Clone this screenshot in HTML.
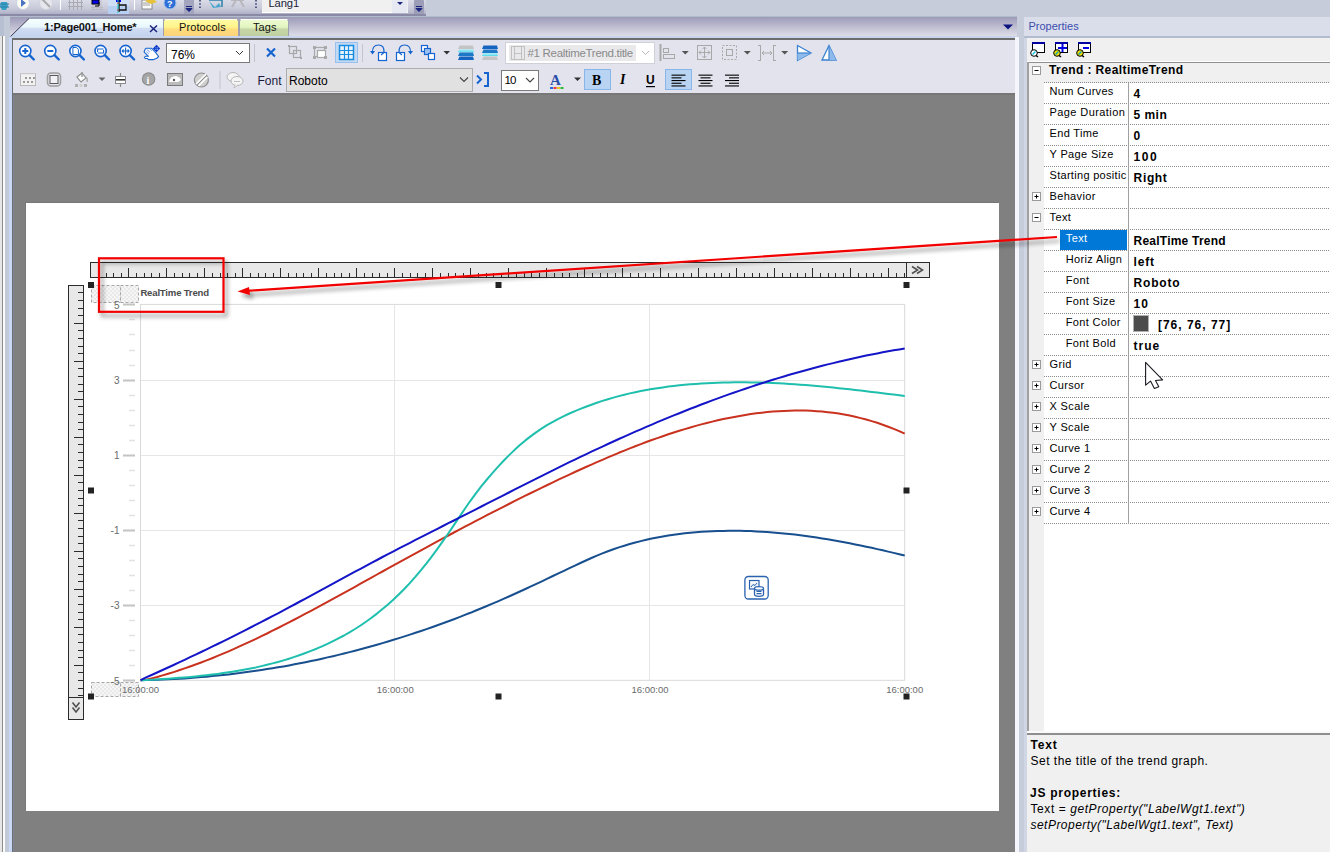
<!DOCTYPE html><html><head><meta charset="utf-8"><style>*{margin:0;padding:0;box-sizing:border-box}
html,body{width:1330px;height:852px;overflow:hidden;background:#c7ccda;font-family:"Liberation Sans",sans-serif;color:#000}
.a{position:absolute}
.t{position:absolute;white-space:pre;line-height:1}
#topbar{left:0;top:0;width:426px;height:14px;background:linear-gradient(#dadbe7,#c9cad9 60%,#aeb0c7)}
#lang{left:262px;top:0;width:146px;height:13px;background:#f0f0f0;border-bottom:1px solid #fff}
#langbtn{left:392px;top:0;width:15px;height:13px;background:#e6e8f2}

#ed{left:12px;top:38px;width:1005px;height:814px;background:#808080;border-left:1px solid #6e6e6e;border-top:2px solid #6c6c6c;box-shadow:inset 1px 0 0 #7c8496}
#tb{left:13px;top:40px;width:1003px;height:54px;background:#e3e3ee}
#page{left:26px;top:203px;width:973px;height:608px;background:#fff;box-shadow:-1px -1px 0 #777}
#props{left:1024px;top:17px;width:306px;height:835px;background:#e9ecf3}
.sep{position:absolute;width:1px;height:20px;background:#b9b9c9}
</style></head><body>
<!-- left strip -->
<div class="a" style="left:0;top:16px;width:4px;height:20px;background:#b7bfd3"></div>
<div class="a" style="left:0;top:36px;width:2px;height:816px;background:#e6e6e6"></div>
<div class="a" style="left:2px;top:36px;width:1px;height:816px;background:#8c8c8c"></div>
<div class="a" style="left:3px;top:36px;width:2px;height:816px;background:#fafafa"></div>
<div class="a" style="left:4px;top:16px;width:1px;height:20px;background:#c3c9d9"></div>
<div class="a" style="left:5px;top:16px;width:5px;height:836px;background:#c2cad8"></div>
<div class="a" style="left:9px;top:37px;width:3px;height:815px;background:#c8d8f6"></div>
<!-- top toolbar -->
<div class="a" id="topbar"></div>
<div class="a" id="lang"></div>
<div class="a" id="langbtn"></div>
<div class="t" style="left:268.5px;top:-2px;font-size:11.2px;color:#1a1a3a;letter-spacing:-0.1px">Lang1</div>
<svg class="a" style="left:0;top:0" width="430" height="16">
 <path d="M397,2 L403,2 L400,5 Z" fill="#1a237e"/>
 <rect x="414" y="0" width="10" height="15" rx="1" fill="#9c9eb8"/>
 <path d="M416,6.5 H422 M416,8.5 L422,8.5 L419,11.5 Z" stroke="#1a237e" fill="#1a237e" stroke-width="1"/>
 <!-- icons -->
 <path d="M1,2 L7,2 L8,6 L6,10 L2,10 L0,6 Z" fill="#3aa0c8"/>
 <path d="M0,4 H9 M0,7 H9" stroke="#2a7fa8" stroke-width="1"/>
 <circle cx="23" cy="3" r="6.5" fill="#fbfbf2" stroke="#c8d2e6"/>
 <path d="M21,-1 L26,3 L21,7 Z" fill="#4a74c0"/>
 <circle cx="46" cy="3" r="6.5" fill="#e6e6ee" stroke="#d2d2dc"/>
 <path d="M42,-1 L50,7" stroke="#aaa" stroke-width="2"/>
 <path d="M60.5,0 V10" stroke="#fff" stroke-width="1"/>
 <path d="M69.5,0V10 M73.5,0V10 M77.5,0V10 M81.5,0V10 M68,2.5H83 M68,6.5H83" stroke="#a9a9b0" stroke-width="1"/>
 <path d="M91,9.5 H103 M91,7.5H103 M93,0V10 M97,0V10 M101,0V10" stroke="#b0b0b8" stroke-width="0.6"/>
 <rect x="92" y="0" width="7" height="4" fill="#0000ee" stroke="#000"/>
 <path d="M99,2 V6 H95" stroke="#000" fill="none"/>
 <rect x="108" y="0" width="21" height="14" fill="#cfe0f6"/>
 <rect x="108" y="6" width="21" height="8" fill="#b7cff0"/>
 <rect x="116" y="0" width="5" height="2" fill="#0000ee"/>
 <path d="M119,0 V12 M119,5 H126 V10 H119" stroke="#111" fill="none" stroke-width="1.3"/>
 <path d="M118,0 V13" stroke="#19c7c7" stroke-width="1"/>
 <circle cx="118" cy="3" r="0.8" fill="#e22"/><circle cx="118" cy="10" r="0.8" fill="#e22"/>
 <path d="M134.5,0 V10" stroke="#fff"/>
 <rect x="142" y="0" width="10" height="9" fill="#fafafa" stroke="#777" stroke-width="0.8"/>
 <path d="M143,3H150 M143,5H150" stroke="#888" stroke-width="0.8"/>
 <path d="M145,1 L152,-2 L157,2 L151,4 Z" fill="#e8c238"/>
 <circle cx="170" cy="3" r="6" fill="#2d6fd6" stroke="#9cc0f0"/>
 <text x="167" y="7" font-size="9" font-weight="bold" fill="#fff" font-family="Liberation Sans">?</text>
 <rect x="184" y="0" width="10" height="15" fill="#a3a5be"/>
 <path d="M186,6.5 H192 M186,8.5 L192,8.5 L189,11.5 Z" stroke="#1a237e" fill="#1a237e" stroke-width="1"/>
 <path d="M200,0 V9" stroke="#3a3f70" stroke-width="1.6" stroke-dasharray="1.6,1.6"/>
 <path d="M209,1 L215,7 L219,3 L221,7 L213,8 Z" fill="#4aa8d0"/>
 <path d="M209,0 L222,0 L222,7" fill="none" stroke="#2b7fa6" stroke-width="1.5"/>
 <path d="M231,0 L244,0 M236,0 L232,7 M240,0 L244,7" stroke="#b6b6bc" stroke-width="2"/>
 <path d="M256,0 V9" stroke="#3a3f70" stroke-width="1.6" stroke-dasharray="1.6,1.6"/>
</svg>
<!-- tab strip -->
<div class="a" style="left:0;top:14px;width:426px;height:2px;background:#8a8aa6"></div>
<div class="a" style="left:10px;top:16px;width:1007px;height:1px;background:#b0bccc"></div>
<div class="a" style="left:10px;top:17px;width:1007px;height:19px;background:linear-gradient(#9c9ab8,#bdbcd0 50%,#dddde7)"></div>
<div class="a" style="left:10px;top:36px;width:1007px;height:2px;background:#c6d5ec"></div>
<svg class="a" style="left:0;top:16px" width="1020" height="24">
 <defs>
  <linearGradient id="tg1" x1="0" y1="0" x2="0" y2="1"><stop offset="0" stop-color="#f6ffff"/><stop offset="0.48" stop-color="#e8f6fc"/><stop offset="0.56" stop-color="#cfdcf2"/><stop offset="1" stop-color="#c3d2ee"/></linearGradient>
  <linearGradient id="tg2" x1="0" y1="0" x2="0" y2="1"><stop offset="0" stop-color="#fffca8"/><stop offset="0.5" stop-color="#fff48a"/><stop offset="0.62" stop-color="#fedc7c"/><stop offset="1" stop-color="#fcd37a"/></linearGradient>
  <linearGradient id="tg3" x1="0" y1="0" x2="0" y2="1"><stop offset="0" stop-color="#f0fcd4"/><stop offset="0.5" stop-color="#e2f6c0"/><stop offset="0.62" stop-color="#c6d6a6"/><stop offset="1" stop-color="#bfcf9f"/></linearGradient>
 </defs>
 <path d="M10.5,20.5 L29,2.5 H163 V20 Z" fill="url(#tg1)"/>
 <path d="M10.5,20.5 L29,2.5" fill="none" stroke="#3d3d52" stroke-width="1"/><path d="M29,2.5 H163" fill="none" stroke="#9ea3bb" stroke-width="1"/>
 <path d="M163.5,20 V5 L166,2.5 H236 L238.5,5 V20 Z" fill="url(#tg2)"/>
 <path d="M163.5,20 V5 L166,2.5 H236 L238.5,5 V20" fill="none" stroke="#8f93aa" stroke-width="0.8"/>
 <path d="M164.5,3.5 H237" stroke="#fffff0" stroke-width="1"/>
 <path d="M239.5,20 V5 L242,2.5 H286 L288.5,5 V20 Z" fill="url(#tg3)"/>
 <path d="M239.5,20 V5 L242,2.5 H286 L288.5,5 V20" fill="none" stroke="#8f93aa" stroke-width="0.8"/>
 <path d="M240.5,3.5 H287.5" stroke="#ffffff" stroke-width="1"/>
 <path d="M150,9.5 L157,16 M157,9.5 L150,16" stroke="#1a237e" stroke-width="1.5"/>
 <path d="M1003,8.5 H1013 L1008,13.5 Z" fill="#0b1580"/>
</svg>
<div class="t" style="left:44px;top:22px;font-size:11px;font-weight:bold;color:#111;letter-spacing:-0.2px">1:Page001_Home*</div>
<div class="t" style="left:179px;top:22px;font-size:11px;color:#111;letter-spacing:0.1px">Protocols</div>
<div class="t" style="left:253px;top:22px;font-size:11px;color:#111;letter-spacing:0.1px">Tags</div>
<!-- editor -->
<div class="a" id="ed"></div>
<div class="a" style="left:1016px;top:37px;width:1px;height:815px;background:#f7f8fb"></div>
<div class="a" id="tb"></div>
<div class="a" style="left:13px;top:93px;width:1003px;height:2px;background:#777"></div>
<div class="a" id="page"></div>

<svg class="a" style="left:0;top:0" width="1020" height="96">
<g transform="translate(26.3,52)"><circle cx="-1" cy="-1" r="5.6" fill="#fff" stroke="#1664d0" stroke-width="1.6"/><path d="M3.2,3.2 L7.5,7.5" stroke="#1664d0" stroke-width="2.4" stroke-linecap="round"/><path d="M-4,-1H2 M-1,-4V2" stroke="#1664d0" stroke-width="2"/></g>
<g transform="translate(51.3,52)"><circle cx="-1" cy="-1" r="5.6" fill="#fff" stroke="#1664d0" stroke-width="1.6"/><path d="M3.2,3.2 L7.5,7.5" stroke="#1664d0" stroke-width="2.4" stroke-linecap="round"/><path d="M-4,-1H2" stroke="#1664d0" stroke-width="2"/></g>
<g transform="translate(76.4,52)"><circle cx="-1" cy="-1" r="5.6" fill="#fff" stroke="#1664d0" stroke-width="1.6"/><path d="M3.2,3.2 L7.5,7.5" stroke="#1664d0" stroke-width="2.4" stroke-linecap="round"/><path d="M-3.5,-4.5 H0 L2,-2.5 V2.5 H-3.5 Z" fill="#fff" stroke="#1664d0" stroke-width="1"/></g>
<g transform="translate(101.6,52)"><circle cx="-1" cy="-1" r="5.6" fill="#fff" stroke="#1664d0" stroke-width="1.6"/><path d="M3.2,3.2 L7.5,7.5" stroke="#1664d0" stroke-width="2.4" stroke-linecap="round"/><path d="M-4,0 V-3 H2 M2,-2 V1 H-4" fill="none" stroke="#1664d0" stroke-width="1.1"/></g>
<g transform="translate(126.6,52)"><circle cx="-1" cy="-1" r="5.6" fill="#fff" stroke="#1664d0" stroke-width="1.6"/><path d="M3.2,3.2 L7.5,7.5" stroke="#1664d0" stroke-width="2.4" stroke-linecap="round"/><path d="M-4.5,-1H2.5 M-1,-4.5V2.5 M-3,-2.5 L-4.5,-1 L-3,0.5 M1,-2.5 L2.5,-1 L1,0.5" fill="none" stroke="#1664d0" stroke-width="1.1"/></g>
<path d="M146.3,48.2 L151.4,48.2 L155.5,52.3 L158.6,56.5 L156.8,58.3 L153.7,59.6 L148.3,59.6 L147.5,58.5 L145.2,58.5 L144.3,57.5 L145.4,56.3 L148.5,56.3 L145.2,53.1 L144.1,51.8 L145.2,49.2 Z" fill="#fff" stroke="#1664d0" stroke-width="1.1" stroke-linejoin="round"/><path d="M146.8,49.5 L149.8,52 M146.5,51.8 L149,54 M149.5,48.6 L152,51" stroke="#1664d0" stroke-width="1" stroke-dasharray="1,0.6"/><path d="M156.5,44.8 L160.2,48.5 L156.5,52.2 L152.8,48.5 Z" fill="#0a3ccc"/><path d="M155.5,47.5h0.8v0.8h-0.8z M157.3,47.5h0.8v0.8h-0.8z M155.5,49.3h0.8v0.8h-0.8z M157.3,49.3h0.8v0.8h-0.8z" fill="#fff"/>
<rect x="166.5" y="43.5" width="83" height="19" fill="#fff" stroke="#7a7a7a"/>
<path d="M236,51 L239.5,54.5 L243,51" fill="none" stroke="#333" stroke-width="1"/>
<rect x="254" y="44" width="1" height="18" fill="#c4c4d0"/>
<path d="M267,48.5 L275,56.5 M275,48.5 L267,56.5" stroke="#1664d0" stroke-width="2.2"/>
<g fill="none" stroke="#a8a8a8" stroke-width="1.2"><rect x="289.5" y="46.5" width="7" height="7"/><rect x="293.5" y="50.5" width="7" height="7"/><rect x="314.5" y="47.5" width="10" height="9"/><rect x="317.5" y="50.5" width="8" height="7" fill="#fff"/></g>
<g fill="#a8a8a8"><rect x="288" y="45" width="2" height="2"/><rect x="300" y="57" width="2" height="2"/><rect x="313" y="46" width="3" height="3"/><rect x="324" y="46" width="3" height="3"/><rect x="313" y="56" width="3" height="3"/><rect x="324" y="56" width="3" height="3"/></g>
<rect x="335.5" y="42.5" width="22" height="20" fill="#c2daf5" stroke="#99c0ec"/>
<rect x="339.5" y="45.5" width="14" height="14" fill="#e8f4ff" stroke="#1b8de0" stroke-width="1.5"/>
<path d="M344.5,46V59 M348.5,46V59 M340,50.5H353 M340,54.5H353" stroke="#1b8de0" stroke-width="1.2"/>
<rect x="362" y="44" width="1" height="18" fill="#c4c4d0"/>
<g fill="none" stroke="#1664d0" stroke-width="1.2"><rect x="378.5" y="52.5" width="8" height="8" fill="#fff"/><path d="M372.5,53 Q372,45 378.5,45 Q384.5,45 384,52.5 L381,55"/><rect x="396.5" y="52.5" width="8" height="8" fill="#fff"/><path d="M410.5,53 Q411,45 404.5,45 Q398.5,45 399,52.5 L402,55"/></g><path d="M370,51 L375,51 L372.5,54.5 Z M408,51 L413,51 L410.5,54.5 Z" fill="#1664d0"/>
<g stroke="#1664d0" stroke-width="1.2"><rect x="421.5" y="45.5" width="6" height="6" fill="#fff"/><rect x="424.5" y="48.5" width="6" height="6" fill="#9cc3ef"/><rect x="428.5" y="53.5" width="6" height="6" fill="#fff"/></g>
<path d="M443.5,51 H450 L446.75,54.5 Z" fill="#333"/>
<path d="M459.5,45.5 H473 L474,49.0 H458 Z" fill="#c4c4c4"/><path d="M459.5,49.5 H473 L474,51.7 H458 Z" fill="#8ee8f4"/><path d="M458,51.8 H474" stroke="#4fd8ee" stroke-width="0.8"/><path d="M459.5,52.5 H473 L474,56.0 H458 Z" fill="#1e78c8"/><path d="M459.5,56.5 H473 L474,60.0 H458 Z" fill="#1565c0"/>
<path d="M483.5,45.5 H497 L498,49.0 H482 Z" fill="#1565c0"/><path d="M483.5,49.5 H497 L498,53.0 H482 Z" fill="#1e78c8"/><path d="M483.5,53.3 H497 L498,55.5 H482 Z" fill="#8ee8f4"/><path d="M482,55.5 H498" stroke="#4fd8ee" stroke-width="0.8"/><path d="M483.5,56.5 H497 L498,60.0 H482 Z" fill="#c4c4c4"/>
<rect x="505.5" y="42.5" width="149" height="21" fill="#fff" stroke="#d0d0d8"/>
<rect x="509" y="45" width="127" height="16" fill="#e9e9ec"/>
<g fill="none" stroke="#c0c0c0" stroke-width="1"><rect x="511.5" y="46.5" width="13" height="13"/><path d="M514.5,46V60 M521.5,46V60 M514,53.5H522"/></g>
<path d="M642,51 L645.5,54.5 L649,51" fill="none" stroke="#b8b8b8" stroke-width="1"/>
<g fill="none" stroke="#a8a8a8" stroke-width="1"><path d="M660.5,44V61" stroke-width="2"/><rect x="663.5" y="48.5" width="5" height="4"/><rect x="663.5" y="54.5" width="11" height="4"/><rect x="697.5" y="45.5" width="14" height="14"/><path d="M704.5,47V58 M699,52.5H710 M702.5,49 L704.5,47 L706.5,49 M702.5,56 L704.5,58 L706.5,56 M701,50.5 L699,52.5 L701,54.5 M708,50.5 L710,52.5 L708,54.5"/><rect x="722.5" y="45.5" width="14" height="14" stroke-dasharray="2,1.5"/><rect x="726.5" y="49.5" width="6" height="6"/><path d="M760.5,45V61 M773.5,45V61 M758,45.5H761 M758,60.5H761 M773,45.5H776 M773,60.5H776 M762,53H772 M764,51 L762,53 L764,55 M770,51 L772,53 L770,55"/></g>
<path d="M681.8,51 H688.8 L685.3,54.5 Z" fill="#555"/>
<path d="M743.8,51 H750.8 L747.3,54.5 Z" fill="#555"/>
<path d="M781.2,51 H788.2 L784.7,54.5 Z" fill="#555"/>
<path d="M797.5,45.5 L811,53 L797.5,60.5 Z" fill="#fff" stroke="#3b82d0" stroke-width="1.3"/><path d="M797.5,53 H811 L797.5,60.5 Z" fill="#8fbbec"/><path d="M797.5,53 H810" stroke="#3b82d0" stroke-width="1.2"/>
<path d="M829,45.5 L836,60 H822 Z" fill="#fff" stroke="#3b82d0" stroke-width="1.3"/><path d="M829,45.5 L836,60 H829 Z" fill="#8fbbec"/><path d="M829,46 V60" stroke="#3b82d0" stroke-width="1.2"/>
<g transform="translate(20,71)"><rect x="0.5" y="2.5" width="15" height="12" fill="#f2f2f2" stroke="#b8b8b8"/><path d="M0.5,3 H15.5" stroke="#ddd"/><g fill="#9a9a9a"><rect x="5" y="6" width="2" height="2"/><rect x="9" y="6" width="2" height="2"/><rect x="13" y="6" width="2" height="2"/><rect x="3" y="10" width="2" height="2"/><rect x="7" y="10" width="2" height="2"/><rect x="11" y="10" width="2" height="2"/></g></g>
<rect x="47.5" y="73" width="13" height="13" rx="3.5" fill="none" stroke="#a0a0a0" stroke-width="1.6"/><rect x="50" y="75.5" width="8" height="8" fill="#f2f2f6" stroke="#5a5a5a" stroke-width="1"/>
<g transform="translate(74,71)"><path d="M3,6 L8,2 L12,7 L7,11 Z" fill="#fff" stroke="#8a8a8a" stroke-width="1.1"/><path d="M8,1 V6" stroke="#9a9a9a" stroke-width="1.5"/><path d="M12,6 Q14,8 13,11" stroke="#b0b0b0" stroke-width="1.5" fill="none"/><rect x="1" y="13" width="3" height="3" fill="#b0b0b0"/><rect x="5.5" y="13" width="3" height="3" fill="#d0d0d0"/><rect x="10" y="13" width="3" height="3" fill="#b0b0b0"/></g>
<path d="M98.5,77.5 H105.5 L102,81 Z" fill="#666"/>
<g fill="none" stroke="#8a8a8a"><path d="M120.5,73V87" stroke-width="1.2"/><rect x="115.5" y="76.5" width="10" height="3" fill="#fff"/><rect x="115.5" y="80.5" width="10" height="3" fill="#fff"/></g><path d="M116,79.5H125" stroke="#333" stroke-width="1"/>
<circle cx="148.6" cy="79" r="6.8" fill="#8c8c8c"/><circle cx="148.6" cy="79" r="5.6" fill="#a6a6a6"/><text x="146.6" y="83.5" font-family="Liberation Serif" font-weight="bold" font-size="10" fill="#fff">i</text>
<rect x="167" y="73" width="16" height="13" fill="#7a7a7a"/><rect x="168" y="74" width="14" height="11" fill="#bcbcbc"/><path d="M169,82 Q170,76 176,76 Q180,77 181,80 L178,82 Z" fill="#fff"/><circle cx="174" cy="80" r="1.2" fill="#555"/>
<circle cx="201.4" cy="80" r="7" fill="#cfcfcf" stroke="#8e8e8e" stroke-width="1.2"/><path d="M196,84 L206,74 M198.5,86 L207.5,77" stroke="#fff" stroke-width="1.5"/><path d="M197,85 L206.5,75.5" stroke="#8e8e8e" stroke-width="1"/>
<rect x="219.5" y="71" width="1" height="18" fill="#c4c4d0"/>
<g transform="translate(226,71)"><ellipse cx="7" cy="6" rx="6" ry="4.5" fill="#f4f4f4" stroke="#b6b6b6"/><ellipse cx="11" cy="10" rx="6" ry="4.5" fill="#f4f4f4" stroke="#b6b6b6"/><path d="M9,14 L8,17 L12,14" fill="#f4f4f4" stroke="#b6b6b6" stroke-width="0.8"/><path d="M8.5,10.5H9.5 M10.5,10.5H11.5 M12.5,10.5H13.5" stroke="#888"/></g>
<rect x="286.5" y="68.5" width="186" height="23" fill="#e1e1e1" stroke="#adadad"/>
<path d="M460,77.5 L464,81.5 L468,77.5" fill="none" stroke="#444" stroke-width="1.1"/>
<path d="M477,75.5 L481,79.5 L477,83.5" fill="none" stroke="#1664d0" stroke-width="2"/><path d="M484,73 H488 V86 H484" fill="none" stroke="#1664d0" stroke-width="2"/>
<rect x="501.5" y="70.5" width="37" height="20" fill="#fff" stroke="#7a7a7a"/>
<path d="M526,78 L530,82 L534,78" fill="none" stroke="#444" stroke-width="1.1"/>
<text x="550" y="85" font-family="Liberation Serif" font-weight="bold" font-size="15" fill="#2b4fa8">A</text>
<rect x="550" y="87" width="3" height="2" fill="#2a6ae0"/><rect x="553.5" y="87" width="3" height="2" fill="#e83a3a"/><rect x="557" y="87" width="3" height="2" fill="#f0c020"/><rect x="560.5" y="87" width="3" height="2" fill="#2eb82e"/>
<path d="M574,77.5 H581 L577.5,81 Z" fill="#333"/>
<rect x="584.5" y="69.5" width="26" height="20" fill="#b8d4f2" stroke="#88b6ea"/>
<text x="592" y="84.5" font-family="Liberation Serif" font-weight="bold" font-size="14" fill="#000">B</text>
<text x="620" y="84" font-family="Liberation Serif" font-style="italic" font-weight="bold" font-size="14" fill="#000">I</text>
<text x="646" y="84" font-family="Liberation Sans" font-weight="bold" font-size="12" fill="#000">U</text><rect x="646" y="86" width="9" height="1.2" fill="#000"/>
<rect x="665.5" y="69.5" width="26" height="20" fill="#b8d4f2" stroke="#88b6ea"/>
<rect x="671.5" y="74.6" width="14" height="1.1" fill="#000"/><rect x="671.5" y="77.3" width="10" height="1.1" fill="#000"/><rect x="671.5" y="80" width="14" height="1.1" fill="#000"/><rect x="671.5" y="82.7" width="10" height="1.1" fill="#000"/><rect x="671.5" y="85.4" width="14" height="1.1" fill="#000"/>
<rect x="698.5" y="74.6" width="14" height="1.1" fill="#000"/><rect x="700.5" y="77.3" width="10" height="1.1" fill="#000"/><rect x="698.5" y="80" width="14" height="1.1" fill="#000"/><rect x="700.5" y="82.7" width="10" height="1.1" fill="#000"/><rect x="698.5" y="85.4" width="14" height="1.1" fill="#000"/>
<rect x="725" y="74.6" width="14" height="1.1" fill="#000"/><rect x="729" y="77.3" width="10" height="1.1" fill="#000"/><rect x="725" y="80" width="14" height="1.1" fill="#000"/><rect x="729" y="82.7" width="10" height="1.1" fill="#000"/><rect x="725" y="85.4" width="14" height="1.1" fill="#000"/>
</svg>
<div class="t" style="left:171px;top:48.5px;font-size:12px;color:#000">76%</div>
<div class="t" style="left:527.5px;top:48px;font-size:11.5px;color:#8a8a8a;letter-spacing:-0.3px">#1 RealtimeTrend.title</div>
<div class="t" style="left:257.5px;top:75px;font-size:12px;color:#1a1a40">Font</div>
<div class="t" style="left:289px;top:75px;font-size:12px;color:#000">Roboto</div>
<div class="t" style="left:504.5px;top:75px;font-size:11.5px;color:#000;letter-spacing:-0.8px">10</div>
<div class="a" style="left:1015px;top:37px;width:4px;height:815px;background:#f4f6fc"></div>
<div class="a" style="left:1024px;top:17px;width:306px;height:835px;background:#d0d6e4"></div>
<div class="a" style="left:1024px;top:17px;width:306px;height:19px;background:#dadeea"></div>
<div class="a" style="left:1024px;top:36px;width:306px;height:2px;background:#b3bccf"></div>
<div class="t" style="left:1028.5px;top:21px;font-size:11px;color:#3a4eb0;letter-spacing:0px">Properties</div>
<div class="a" style="left:1027px;top:38px;width:303px;height:814px;background:#f0f0f0"></div>
<svg class="a" style="left:1028px;top:40px" width="70" height="20">
<g transform="translate(2,1)"><rect x="2.5" y="1.5" width="12" height="10" fill="#fff" stroke="#000"/><rect x="2" y="1" width="13" height="2" fill="#0000a0"/>
<circle cx="4" cy="12" r="3.3" fill="#fff" stroke="#000"/><path d="M2.5,13.5 L5.5,10.5" stroke="#00c0e0" stroke-width="1.2"/><path d="M6,14.5 L8,16" stroke="#000" stroke-width="1.5"/></g>
<g transform="translate(25,1)"><rect x="2.5" y="1.5" width="12" height="10" fill="#fff" stroke="#000"/><rect x="2" y="1" width="13" height="2" fill="#0000a0"/>
<path d="M9.5,3 V11 M5,7 H14" stroke="#0000e0" stroke-width="2"/>
<circle cx="4" cy="12" r="3.3" fill="#f0e000" stroke="#000"/><path d="M2.5,13.5 L5.5,10.5" stroke="#00a0c0" stroke-width="1.2"/><path d="M6,14.5 L8,16" stroke="#000" stroke-width="1.5"/></g>
<g transform="translate(48,1)"><rect x="2.5" y="1.5" width="12" height="10" fill="#fff" stroke="#000"/><rect x="2" y="1" width="13" height="2" fill="#0000a0"/>
<path d="M7,7 H13" stroke="#0000e0" stroke-width="2"/>
<circle cx="4" cy="12" r="3.3" fill="#f0e000" stroke="#000"/><path d="M2.5,13.5 L5.5,10.5" stroke="#00a0c0" stroke-width="1.2"/><path d="M6,14.5 L8,16" stroke="#000" stroke-width="1.5"/></g>
</svg>
<div class="a" style="left:1027px;top:61px;width:303px;height:1px;background:#fff"></div>
<div class="a" style="left:1027px;top:62px;width:303px;height:1px;background:#8f8f8f"></div>
<div class="a" style="left:1027px;top:62px;width:2px;height:673px;background:#a0a0a0"></div>
<div class="a" style="left:1029px;top:63px;width:301px;height:668px;background:#fff"></div>
<div class="a" style="left:1029px;top:63px;width:15px;height:668px;background:#f0f0f0"></div>
<div class="a" style="left:1029px;top:63px;width:301px;height:20px;background:#f0f0f0"></div>
<div class="a" style="left:1027px;top:731px;width:303px;height:2px;background:#fafafa"></div>
<div class="a" style="left:1027px;top:733px;width:303px;height:2px;background:#8f8f8f"></div>
<svg class="a" style="left:0;top:0" width="1330" height="852">
<defs><pattern id="dot" width="2" height="1" patternUnits="userSpaceOnUse"><rect width="1" height="1" fill="#8c8c8c"/></pattern></defs>
<rect x="1044" y="82" width="286" height="1" fill="url(#dot)"/>
<rect x="1044" y="103" width="286" height="1" fill="url(#dot)"/>
<rect x="1044" y="124" width="286" height="1" fill="url(#dot)"/>
<rect x="1044" y="145" width="286" height="1" fill="url(#dot)"/>
<rect x="1044" y="166" width="286" height="1" fill="url(#dot)"/>
<rect x="1044" y="187" width="286" height="1" fill="url(#dot)"/>
<rect x="1044" y="208" width="286" height="1" fill="url(#dot)"/>
<rect x="1044" y="229" width="286" height="1" fill="url(#dot)"/>
<rect x="1044" y="250" width="286" height="1" fill="url(#dot)"/>
<rect x="1044" y="271" width="286" height="1" fill="url(#dot)"/>
<rect x="1044" y="292" width="286" height="1" fill="url(#dot)"/>
<rect x="1044" y="313" width="286" height="1" fill="url(#dot)"/>
<rect x="1044" y="334" width="286" height="1" fill="url(#dot)"/>
<rect x="1044" y="355" width="286" height="1" fill="url(#dot)"/>
<rect x="1044" y="376" width="286" height="1" fill="url(#dot)"/>
<rect x="1044" y="397" width="286" height="1" fill="url(#dot)"/>
<rect x="1044" y="418" width="286" height="1" fill="url(#dot)"/>
<rect x="1044" y="439" width="286" height="1" fill="url(#dot)"/>
<rect x="1044" y="460" width="286" height="1" fill="url(#dot)"/>
<rect x="1044" y="481" width="286" height="1" fill="url(#dot)"/>
<rect x="1044" y="502" width="286" height="1" fill="url(#dot)"/>
<rect x="1044" y="523" width="286" height="1" fill="url(#dot)"/>
<rect x="1128" y="83" width="1" height="441" fill="#a0a0a0"/>
<rect x="1060" y="230" width="67" height="20" fill="#0078d7"/>
<rect x="1032.5" y="66.5" width="8" height="8" fill="#fff" stroke="#9a9a9a"/><path d="M1034.5,70.5H1038.5" stroke="#000"/>
<rect x="1032.5" y="192.5" width="8" height="8" fill="#fff" stroke="#9a9a9a"/><path d="M1034.5,196.5H1038.5" stroke="#000"/><path d="M1036.5,194.5V198.5" stroke="#000"/>
<rect x="1032.5" y="213.5" width="8" height="8" fill="#fff" stroke="#9a9a9a"/><path d="M1034.5,217.5H1038.5" stroke="#000"/>
<rect x="1032.5" y="360.5" width="8" height="8" fill="#fff" stroke="#9a9a9a"/><path d="M1034.5,364.5H1038.5" stroke="#000"/><path d="M1036.5,362.5V366.5" stroke="#000"/>
<rect x="1032.5" y="381.5" width="8" height="8" fill="#fff" stroke="#9a9a9a"/><path d="M1034.5,385.5H1038.5" stroke="#000"/><path d="M1036.5,383.5V387.5" stroke="#000"/>
<rect x="1032.5" y="402.5" width="8" height="8" fill="#fff" stroke="#9a9a9a"/><path d="M1034.5,406.5H1038.5" stroke="#000"/><path d="M1036.5,404.5V408.5" stroke="#000"/>
<rect x="1032.5" y="423.5" width="8" height="8" fill="#fff" stroke="#9a9a9a"/><path d="M1034.5,427.5H1038.5" stroke="#000"/><path d="M1036.5,425.5V429.5" stroke="#000"/>
<rect x="1032.5" y="444.5" width="8" height="8" fill="#fff" stroke="#9a9a9a"/><path d="M1034.5,448.5H1038.5" stroke="#000"/><path d="M1036.5,446.5V450.5" stroke="#000"/>
<rect x="1032.5" y="465.5" width="8" height="8" fill="#fff" stroke="#9a9a9a"/><path d="M1034.5,469.5H1038.5" stroke="#000"/><path d="M1036.5,467.5V471.5" stroke="#000"/>
<rect x="1032.5" y="486.5" width="8" height="8" fill="#fff" stroke="#9a9a9a"/><path d="M1034.5,490.5H1038.5" stroke="#000"/><path d="M1036.5,488.5V492.5" stroke="#000"/>
<rect x="1032.5" y="507.5" width="8" height="8" fill="#fff" stroke="#9a9a9a"/><path d="M1034.5,511.5H1038.5" stroke="#000"/><path d="M1036.5,509.5V513.5" stroke="#000"/>
<rect x="1133.5" y="315.5" width="15" height="16" fill="#4c4c4d" stroke="#b0b0b0"/>
</svg>
<div class="t" style="left:1049px;top:64px;font-size:12px;font-weight:bold;letter-spacing:0.4px">Trend : RealtimeTrend</div>
<div class="t" style="left:1049.5px;top:86.1px;font-size:11px;color:#000;letter-spacing:0.3px">Num Curves</div>
<div class="t" style="left:1133.6px;top:88.1px;font-size:12px;font-weight:bold;letter-spacing:0px">4</div>
<div class="t" style="left:1049.5px;top:107.1px;font-size:11px;color:#000;letter-spacing:0.42px">Page Duration</div>
<div class="t" style="left:1133.6px;top:109.1px;font-size:12px;font-weight:bold;letter-spacing:0.45px">5 min</div>
<div class="t" style="left:1049.5px;top:128.1px;font-size:11px;color:#000;letter-spacing:0.35px">End Time</div>
<div class="t" style="left:1133.6px;top:130.1px;font-size:12px;font-weight:bold;letter-spacing:0px">0</div>
<div class="t" style="left:1049.5px;top:149.1px;font-size:11px;color:#000;letter-spacing:0.35px">Y Page Size</div>
<div class="t" style="left:1133.6px;top:151.1px;font-size:12px;font-weight:bold;letter-spacing:1.5px">100</div>
<div class="t" style="left:1049.5px;top:170.1px;font-size:11px;color:#000;letter-spacing:0.3px">Starting positic</div>
<div class="t" style="left:1133.6px;top:172.1px;font-size:12px;font-weight:bold;letter-spacing:0.65px">Right</div>
<div class="t" style="left:1049.5px;top:191.1px;font-size:11px;color:#000;letter-spacing:0.35px">Behavior</div>
<div class="t" style="left:1049.5px;top:212.1px;font-size:11px;color:#000;letter-spacing:0.4px">Text</div>
<div class="t" style="left:1065.8px;top:233.1px;font-size:11px;color:#fff;letter-spacing:0.4px">Text</div>
<div class="t" style="left:1133.6px;top:235.1px;font-size:12px;font-weight:bold;letter-spacing:0.22px">RealTime Trend</div>
<div class="t" style="left:1065.8px;top:254.1px;font-size:11px;color:#000;letter-spacing:0.35px">Horiz Align</div>
<div class="t" style="left:1133.6px;top:256.1px;font-size:12px;font-weight:bold;letter-spacing:0.8px">left</div>
<div class="t" style="left:1065.8px;top:275.1px;font-size:11px;color:#000;letter-spacing:0.4px">Font</div>
<div class="t" style="left:1133.6px;top:277.1px;font-size:12px;font-weight:bold;letter-spacing:0.8px">Roboto</div>
<div class="t" style="left:1065.8px;top:296.1px;font-size:11px;color:#000;letter-spacing:0.35px">Font Size</div>
<div class="t" style="left:1133.6px;top:298.1px;font-size:12px;font-weight:bold;letter-spacing:1.0px">10</div>
<div class="t" style="left:1065.8px;top:317.1px;font-size:11px;color:#000;letter-spacing:0.35px">Font Color</div>
<div class="t" style="left:1157.9px;top:319.1px;font-size:12px;font-weight:bold;letter-spacing:1.0px">[76, 76, 77]</div>
<div class="t" style="left:1065.8px;top:338.1px;font-size:11px;color:#000;letter-spacing:0.35px">Font Bold</div>
<div class="t" style="left:1133.6px;top:340.1px;font-size:12px;font-weight:bold;letter-spacing:0.95px">true</div>
<div class="t" style="left:1049.5px;top:359.1px;font-size:11px;color:#000;letter-spacing:0.35px">Grid</div>
<div class="t" style="left:1049.5px;top:380.1px;font-size:11px;color:#000;letter-spacing:0.35px">Cursor</div>
<div class="t" style="left:1049.5px;top:401.1px;font-size:11px;color:#000;letter-spacing:0.35px">X Scale</div>
<div class="t" style="left:1049.5px;top:422.1px;font-size:11px;color:#000;letter-spacing:0.35px">Y Scale</div>
<div class="t" style="left:1049.5px;top:443.1px;font-size:11px;color:#000;letter-spacing:0.35px">Curve 1</div>
<div class="t" style="left:1049.5px;top:464.1px;font-size:11px;color:#000;letter-spacing:0.35px">Curve 2</div>
<div class="t" style="left:1049.5px;top:485.1px;font-size:11px;color:#000;letter-spacing:0.35px">Curve 3</div>
<div class="t" style="left:1049.5px;top:506.1px;font-size:11px;color:#000;letter-spacing:0.35px">Curve 4</div>
<div class="t" style="left:1030.5px;top:739px;font-size:12px;font-weight:bold;letter-spacing:0.85px">Text</div>
<div class="t" style="left:1030.5px;top:755px;font-size:12px;letter-spacing:0.5px">Set the title of the trend graph.</div>
<div class="t" style="left:1030px;top:787px;font-size:12px;font-weight:bold;letter-spacing:0.73px">JS properties:</div>
<div class="t" style="left:1030.5px;top:803px;font-size:12px;letter-spacing:0.57px">Text = <i>getProperty("LabelWgt1.text")</i></div>
<div class="t" style="left:1030.5px;top:819px;font-size:12px;letter-spacing:0.47px"><i>setProperty("LabelWgt1.text", Text)</i></div>
<svg class="a" style="left:0;top:0" width="1330" height="852" viewBox="0 0 1330 852">
<defs><pattern id="hatch" width="4" height="4" patternUnits="userSpaceOnUse"><rect width="4" height="4" fill="#f6f6f6"/><rect width="2" height="2" fill="#e9e9e9"/><rect x="2" y="2" width="2" height="2" fill="#e9e9e9"/></pattern><filter id="sh" x="-20%" y="-20%" width="140%" height="160%"><feGaussianBlur in="SourceAlpha" stdDeviation="2"/><feOffset dx="3" dy="4"/><feComponentTransfer><feFuncA type="linear" slope="0.45"/></feComponentTransfer><feMerge><feMergeNode/><feMergeNode in="SourceGraphic"/></feMerge></filter></defs>
<rect x="90.5" y="262.5" width="816" height="15" fill="#e8e8e8" stroke="#2b2b2b" stroke-width="1"/>
<rect x="906.5" y="262.5" width="23" height="15" fill="#e8e8e8" stroke="#2b2b2b" stroke-width="1"/>
<path d="M98.5,273V277 M106.5,273V277 M113.5,273V277 M121.5,273V277 M128.5,268V277 M136.5,273V277 M144.5,273V277 M151.5,273V277 M159.5,273V277 M166.5,268V277 M174.5,273V277 M182.5,273V277 M189.5,273V277 M197.5,273V277 M204.5,268V277 M212.5,273V277 M220.5,273V277 M227.5,273V277 M235.5,273V277 M242.5,268V277 M250.5,273V277 M258.5,273V277 M265.5,273V277 M273.5,273V277 M280.5,268V277 M288.5,273V277 M296.5,273V277 M303.5,273V277 M311.5,273V277 M318.5,268V277 M326.5,273V277 M334.5,273V277 M341.5,273V277 M349.5,273V277 M356.5,268V277 M364.5,273V277 M372.5,273V277 M379.5,273V277 M387.5,273V277 M394.5,268V277 M402.5,273V277 M410.5,273V277 M417.5,273V277 M425.5,273V277 M432.5,268V277 M440.5,273V277 M448.5,273V277 M455.5,273V277 M463.5,273V277 M470.5,268V277 M478.5,273V277 M486.5,273V277 M493.5,273V277 M501.5,273V277 M508.5,268V277 M516.5,273V277 M524.5,273V277 M531.5,273V277 M539.5,273V277 M546.5,268V277 M554.5,273V277 M562.5,273V277 M569.5,273V277 M577.5,273V277 M584.5,268V277 M592.5,273V277 M600.5,273V277 M607.5,273V277 M615.5,273V277 M622.5,268V277 M630.5,273V277 M638.5,273V277 M645.5,273V277 M653.5,273V277 M660.5,268V277 M668.5,273V277 M676.5,273V277 M683.5,273V277 M691.5,273V277 M698.5,268V277 M706.5,273V277 M714.5,273V277 M721.5,273V277 M729.5,273V277 M736.5,268V277 M744.5,273V277 M752.5,273V277 M759.5,273V277 M767.5,273V277 M774.5,268V277 M782.5,273V277 M790.5,273V277 M797.5,273V277 M805.5,273V277 M812.5,268V277 M820.5,273V277 M828.5,273V277 M835.5,273V277 M843.5,273V277 M850.5,268V277 M858.5,273V277 M866.5,273V277 M873.5,273V277 M881.5,273V277 M888.5,268V277 M896.5,273V277 M904.5,273V277" stroke="#2b2b2b" stroke-width="1"/>
<path d="M912,266.5 L917.5,270 L912,273.5 M917,266.5 L922.5,270 L917,273.5" fill="none" stroke="#505050" stroke-width="1.6"/>
<rect x="68.5" y="285.5" width="15" height="412" fill="#e8e8e8" stroke="#2b2b2b" stroke-width="1"/>
<rect x="68.5" y="697.5" width="15" height="22" fill="#e8e8e8" stroke="#2b2b2b" stroke-width="1"/>
<path d="M78,292.5H83 M78,300.5H83 M78,308.5H83 M78,315.5H83 M74,323.5H83 M78,330.5H83 M78,338.5H83 M78,346.5H83 M78,353.5H83 M74,361.5H83 M78,368.5H83 M78,376.5H83 M78,384.5H83 M78,391.5H83 M74,399.5H83 M78,406.5H83 M78,414.5H83 M78,422.5H83 M78,429.5H83 M74,437.5H83 M78,444.5H83 M78,452.5H83 M78,460.5H83 M78,467.5H83 M74,475.5H83 M78,482.5H83 M78,490.5H83 M78,498.5H83 M78,505.5H83 M74,513.5H83 M78,520.5H83 M78,528.5H83 M78,536.5H83 M78,543.5H83 M74,551.5H83 M78,558.5H83 M78,566.5H83 M78,574.5H83 M78,581.5H83 M74,589.5H83 M78,596.5H83 M78,604.5H83 M78,612.5H83 M78,619.5H83 M74,627.5H83 M78,634.5H83 M78,642.5H83 M78,650.5H83 M78,657.5H83 M74,665.5H83 M78,672.5H83 M78,680.5H83 M78,688.5H83 M78,695.5H83" stroke="#2b2b2b" stroke-width="1"/>
<path d="M72.5,702.5 L76,707 L79.5,702.5 M72.5,707.5 L76,712 L79.5,707.5" fill="none" stroke="#505050" stroke-width="1.6"/>
<rect x="91.5" y="285.5" width="29" height="17" fill="url(#hatch)" stroke="#a8a8a8" stroke-dasharray="3,2"/>
<rect x="120.5" y="285.5" width="18" height="17" fill="url(#hatch)" stroke="#a8a8a8" stroke-dasharray="3,2"/>
<rect x="91.5" y="682.5" width="29" height="14" fill="url(#hatch)" stroke="#a8a8a8" stroke-dasharray="3,2"/>
<rect x="120.5" y="682.5" width="18" height="14" fill="url(#hatch)" stroke="#a8a8a8" stroke-dasharray="3,2"/>
<path d="M140.5,380.5H904.7 M140.5,455.5H904.7 M140.5,530.5H904.7 M140.5,605.5H904.7 M394.5,304.4V680.3 M649.5,304.4V680.3" stroke="#e6e6e6" stroke-width="1"/>
<rect x="140.5" y="304.4" width="764.2" height="375.9" fill="none" stroke="#d9d9d9" stroke-width="1"/>
<path d="M123,304.5H135 M123,380.5H135 M123,455.5H135 M123,530.5H135 M123,605.5H135 M123,680.5H135" stroke="#c4c4c4" stroke-width="1.8"/>
<path d="M129,319.5H135 M129,334.5H135 M129,350.5H135 M129,365.5H135 M129,395.5H135 M129,410.5H135 M129,425.5H135 M129,440.5H135 M129,470.5H135 M129,485.5H135 M129,500.5H135 M129,515.5H135 M129,545.5H135 M129,560.5H135 M129,575.5H135 M129,590.5H135 M129,620.5H135 M129,635.5H135 M129,650.5H135 M129,665.5H135" stroke="#e2e2e2" stroke-width="1.6"/>
<text x="119.5" y="308.6" text-anchor="end" font-family="Liberation Sans" font-size="10" fill="#6a6a6a">5</text>
<text x="119.5" y="383.8" text-anchor="end" font-family="Liberation Sans" font-size="10" fill="#6a6a6a">3</text>
<text x="119.5" y="459.0" text-anchor="end" font-family="Liberation Sans" font-size="10" fill="#6a6a6a">1</text>
<text x="119.5" y="534.1" text-anchor="end" font-family="Liberation Sans" font-size="10" fill="#6a6a6a">-1</text>
<text x="119.5" y="609.3" text-anchor="end" font-family="Liberation Sans" font-size="10" fill="#6a6a6a">-3</text>
<text x="119.5" y="684.5" text-anchor="end" font-family="Liberation Sans" font-size="10" fill="#6a6a6a">-5</text>
<text x="140.5" y="692.8" text-anchor="middle" font-family="Liberation Sans" font-size="9.5" fill="#6a6a6a">16:00:00</text>
<text x="395.2" y="692.8" text-anchor="middle" font-family="Liberation Sans" font-size="9.5" fill="#6a6a6a">16:00:00</text>
<text x="650.0" y="692.8" text-anchor="middle" font-family="Liberation Sans" font-size="9.5" fill="#6a6a6a">16:00:00</text>
<text x="904.7" y="692.8" text-anchor="middle" font-family="Liberation Sans" font-size="9.5" fill="#6a6a6a">16:00:00</text>
<text x="140.4" y="295.6" font-family="Liberation Sans" font-weight="bold" font-size="9.6" fill="#4c4c4d" letter-spacing="-0.2">RealTime Trend</text>
<path d="M140.6,680.2 L146.1,680.1 L151.6,680.0 L157.1,679.8 L162.6,679.6 L168.1,679.3 L173.6,679.1 L179.1,678.7 L184.6,678.4 L190.1,678.0 L195.6,677.6 L201.1,677.1 L206.6,676.7 L212.1,676.1 L217.6,675.6 L223.1,675.0 L228.6,674.4 L234.1,673.7 L239.5,673.1 L245.0,672.3 L250.5,671.6 L256.0,670.8 L261.5,670.0 L267.0,669.1 L272.5,668.2 L278.0,667.3 L283.5,666.4 L289.0,665.4 L294.5,664.3 L300.0,663.3 L305.5,662.2 L311.0,661.0 L316.5,659.9 L322.0,658.7 L327.5,657.4 L333.0,656.2 L338.5,654.9 L344.0,653.5 L349.5,652.1 L355.0,650.7 L360.5,649.3 L366.0,647.8 L371.5,646.3 L377.0,644.7 L382.5,643.1 L388.0,641.5 L393.5,639.8 L399.0,638.1 L404.5,636.4 L410.0,634.6 L415.5,632.8 L421.0,631.0 L426.5,629.1 L431.9,627.2 L437.4,625.2 L442.9,623.3 L448.4,621.2 L453.9,619.2 L459.4,617.1 L464.9,614.9 L470.4,612.8 L475.9,610.5 L481.4,608.3 L486.9,606.0 L492.4,603.7 L497.9,601.3 L503.4,598.9 L508.9,596.5 L514.4,594.0 L519.9,591.5 L525.4,589.0 L530.9,586.4 L536.4,583.9 L541.9,581.3 L547.4,578.7 L552.9,576.0 L558.4,573.4 L563.9,570.8 L569.4,568.2 L574.9,565.6 L580.4,563.0 L585.9,560.5 L591.4,558.0 L596.9,555.6 L602.4,553.4 L607.9,551.3 L613.4,549.3 L618.8,547.4 L624.3,545.7 L629.8,544.0 L635.3,542.5 L640.8,541.1 L646.3,539.8 L651.8,538.6 L657.3,537.5 L662.8,536.4 L668.3,535.5 L673.8,534.7 L679.3,534.0 L684.8,533.3 L690.3,532.7 L695.8,532.2 L701.3,531.8 L706.8,531.5 L712.3,531.2 L717.8,531.0 L723.3,530.9 L728.8,530.8 L734.3,530.8 L739.8,530.8 L745.3,530.9 L750.8,531.1 L756.3,531.4 L761.8,531.7 L767.3,532.0 L772.8,532.4 L778.3,532.9 L783.8,533.4 L789.3,534.0 L794.8,534.6 L800.3,535.3 L805.8,536.0 L811.2,536.8 L816.7,537.6 L822.2,538.4 L827.7,539.3 L833.2,540.3 L838.7,541.2 L844.2,542.3 L849.7,543.3 L855.2,544.4 L860.7,545.5 L866.2,546.7 L871.7,547.8 L877.2,549.1 L882.7,550.3 L888.2,551.6 L893.7,552.9 L899.2,554.2 L904.7,555.5" fill="none" stroke="#174f8f" stroke-width="2" stroke-linejoin="round"/>
<path d="M140.6,680.2 L146.1,679.8 L151.6,678.4 L157.1,677.0 L162.6,675.4 L168.1,673.8 L173.6,672.1 L179.1,670.3 L184.6,668.4 L190.1,666.5 L195.6,664.5 L201.1,662.5 L206.6,660.4 L212.1,658.2 L217.6,655.9 L223.1,653.6 L228.6,651.3 L234.1,648.9 L239.5,646.4 L245.0,643.9 L250.5,641.4 L256.0,638.8 L261.5,636.1 L267.0,633.5 L272.5,630.7 L278.0,628.0 L283.5,625.2 L289.0,622.4 L294.5,619.5 L300.0,616.6 L305.5,613.7 L311.0,610.8 L316.5,607.9 L322.0,604.9 L327.5,601.9 L333.0,598.9 L338.5,595.9 L344.0,592.8 L349.5,589.8 L355.0,586.8 L360.5,583.7 L366.0,580.7 L371.5,577.6 L377.0,574.5 L382.5,571.5 L388.0,568.4 L393.5,565.4 L399.0,562.4 L404.5,559.3 L410.0,556.3 L415.5,553.3 L421.0,550.3 L426.5,547.3 L431.9,544.4 L437.4,541.4 L442.9,538.4 L448.4,535.5 L453.9,532.5 L459.4,529.6 L464.9,526.7 L470.4,523.8 L475.9,520.9 L481.4,518.1 L486.9,515.2 L492.4,512.4 L497.9,509.6 L503.4,506.8 L508.9,504.0 L514.4,501.2 L519.9,498.4 L525.4,495.7 L530.9,493.0 L536.4,490.3 L541.9,487.6 L547.4,485.0 L552.9,482.3 L558.4,479.7 L563.9,477.1 L569.4,474.6 L574.9,472.0 L580.4,469.5 L585.9,467.0 L591.4,464.6 L596.9,462.2 L602.4,459.8 L607.9,457.4 L613.4,455.1 L618.8,452.8 L624.3,450.6 L629.8,448.4 L635.3,446.2 L640.8,444.1 L646.3,442.0 L651.8,440.0 L657.3,438.1 L662.8,436.2 L668.3,434.3 L673.8,432.5 L679.3,430.8 L684.8,429.1 L690.3,427.5 L695.8,425.9 L701.3,424.4 L706.8,423.0 L712.3,421.6 L717.8,420.3 L723.3,419.1 L728.8,417.9 L734.3,416.9 L739.8,415.9 L745.3,414.9 L750.8,414.1 L756.3,413.3 L761.8,412.7 L767.3,412.1 L772.8,411.6 L778.3,411.2 L783.8,410.9 L789.3,410.7 L794.8,410.5 L800.3,410.5 L805.8,410.6 L811.2,410.8 L816.7,411.2 L822.2,411.6 L827.7,412.2 L833.2,412.8 L838.7,413.6 L844.2,414.5 L849.7,415.6 L855.2,416.8 L860.7,418.1 L866.2,419.5 L871.7,421.1 L877.2,422.8 L882.7,424.7 L888.2,426.7 L893.7,428.9 L899.2,431.2 L904.7,433.7" fill="none" stroke="#c8321e" stroke-width="2" stroke-linejoin="round"/>
<path d="M140.6,680.2 L146.1,680.1 L151.6,679.8 L157.1,679.4 L162.6,679.0 L168.1,678.7 L173.6,678.3 L179.1,677.8 L184.6,677.4 L190.1,676.9 L195.6,676.4 L201.1,675.8 L206.6,675.2 L212.1,674.6 L217.6,673.9 L223.1,673.1 L228.6,672.3 L234.1,671.5 L239.5,670.6 L245.0,669.6 L250.5,668.5 L256.0,667.4 L261.5,666.1 L267.0,664.8 L272.5,663.4 L278.0,662.0 L283.5,660.4 L289.0,658.7 L294.5,656.9 L300.0,655.0 L305.5,653.0 L311.0,650.9 L316.5,648.7 L322.0,646.3 L327.5,643.9 L333.0,641.2 L338.5,638.4 L344.0,635.5 L349.5,632.3 L355.0,629.0 L360.5,625.5 L366.0,621.7 L371.5,617.8 L377.0,613.6 L382.5,609.1 L388.0,604.4 L393.5,599.5 L399.0,594.2 L404.5,588.7 L410.0,582.9 L415.5,576.7 L421.0,570.2 L426.5,563.4 L431.9,556.3 L437.4,548.8 L442.9,541.1 L448.4,533.2 L453.9,525.1 L459.4,516.9 L464.9,508.7 L470.4,500.8 L475.9,493.3 L481.4,486.2 L486.9,479.5 L492.4,473.1 L497.9,466.9 L503.4,461.0 L508.9,455.4 L514.4,450.1 L519.9,445.1 L525.4,440.4 L530.9,436.1 L536.4,432.1 L541.9,428.4 L547.4,424.9 L552.9,421.8 L558.4,418.8 L563.9,416.1 L569.4,413.5 L574.9,411.1 L580.4,408.9 L585.9,406.7 L591.4,404.7 L596.9,402.7 L602.4,400.9 L607.9,399.2 L613.4,397.6 L618.8,396.1 L624.3,394.7 L629.8,393.4 L635.3,392.2 L640.8,391.1 L646.3,390.1 L651.8,389.1 L657.3,388.2 L662.8,387.4 L668.3,386.6 L673.8,386.0 L679.3,385.3 L684.8,384.8 L690.3,384.3 L695.8,383.9 L701.3,383.5 L706.8,383.2 L712.3,382.9 L717.8,382.7 L723.3,382.5 L728.8,382.4 L734.3,382.3 L739.8,382.3 L745.3,382.3 L750.8,382.4 L756.3,382.5 L761.8,382.6 L767.3,382.8 L772.8,383.0 L778.3,383.3 L783.8,383.6 L789.3,383.9 L794.8,384.3 L800.3,384.7 L805.8,385.1 L811.2,385.6 L816.7,386.0 L822.2,386.5 L827.7,387.0 L833.2,387.6 L838.7,388.2 L844.2,388.7 L849.7,389.3 L855.2,390.0 L860.7,390.6 L866.2,391.2 L871.7,391.9 L877.2,392.5 L882.7,393.2 L888.2,393.9 L893.7,394.6 L899.2,395.3 L904.7,396.0" fill="none" stroke="#1fbfae" stroke-width="2" stroke-linejoin="round"/>
<path d="M140.6,680.2 L146.1,677.4 L151.6,675.0 L157.1,672.5 L162.6,670.0 L168.1,667.5 L173.6,665.0 L179.1,662.4 L184.6,659.8 L190.1,657.2 L195.6,654.6 L201.1,652.0 L206.6,649.4 L212.1,646.7 L217.6,644.0 L223.1,641.3 L228.6,638.6 L234.1,635.8 L239.5,633.1 L245.0,630.3 L250.5,627.5 L256.0,624.7 L261.5,621.9 L267.0,619.0 L272.5,616.1 L278.0,613.3 L283.5,610.3 L289.0,607.4 L294.5,604.5 L300.0,601.5 L305.5,598.6 L311.0,595.6 L316.5,592.6 L322.0,589.6 L327.5,586.7 L333.0,583.7 L338.5,580.7 L344.0,577.7 L349.5,574.7 L355.0,571.7 L360.5,568.8 L366.0,565.8 L371.5,562.9 L377.0,560.0 L382.5,557.0 L388.0,554.2 L393.5,551.3 L399.0,548.4 L404.5,545.6 L410.0,542.8 L415.5,539.9 L421.0,537.1 L426.5,534.3 L431.9,531.6 L437.4,528.8 L442.9,526.0 L448.4,523.2 L453.9,520.5 L459.4,517.7 L464.9,514.9 L470.4,512.1 L475.9,509.3 L481.4,506.5 L486.9,503.7 L492.4,500.9 L497.9,498.1 L503.4,495.3 L508.9,492.5 L514.4,489.7 L519.9,486.9 L525.4,484.1 L530.9,481.3 L536.4,478.6 L541.9,475.8 L547.4,473.1 L552.9,470.3 L558.4,467.6 L563.9,464.9 L569.4,462.2 L574.9,459.6 L580.4,456.9 L585.9,454.3 L591.4,451.7 L596.9,449.1 L602.4,446.6 L607.9,444.0 L613.4,441.5 L618.8,439.0 L624.3,436.6 L629.8,434.1 L635.3,431.7 L640.8,429.3 L646.3,426.9 L651.8,424.6 L657.3,422.2 L662.8,419.9 L668.3,417.6 L673.8,415.4 L679.3,413.2 L684.8,411.0 L690.3,408.8 L695.8,406.7 L701.3,404.5 L706.8,402.5 L712.3,400.4 L717.8,398.4 L723.3,396.4 L728.8,394.4 L734.3,392.5 L739.8,390.6 L745.3,388.7 L750.8,386.9 L756.3,385.0 L761.8,383.3 L767.3,381.5 L772.8,379.8 L778.3,378.1 L783.8,376.5 L789.3,374.8 L794.8,373.3 L800.3,371.7 L805.8,370.2 L811.2,368.7 L816.7,367.2 L822.2,365.8 L827.7,364.4 L833.2,363.1 L838.7,361.7 L844.2,360.5 L849.7,359.2 L855.2,358.0 L860.7,356.8 L866.2,355.6 L871.7,354.5 L877.2,353.4 L882.7,352.3 L888.2,351.3 L893.7,350.3 L899.2,349.4 L904.7,348.5" fill="none" stroke="#1515c8" stroke-width="2" stroke-linejoin="round"/>
<rect x="88" y="282" width="6" height="6" fill="#222"/>
<rect x="495.5" y="282" width="6" height="6" fill="#222"/>
<rect x="903.5" y="282" width="6" height="6" fill="#222"/>
<rect x="88" y="487.5" width="6" height="6" fill="#222"/>
<rect x="903.5" y="487.5" width="6" height="6" fill="#222"/>
<rect x="88" y="693.5" width="6" height="6" fill="#222"/>
<rect x="495.5" y="693.5" width="6" height="6" fill="#222"/>
<rect x="903.5" y="693.5" width="6" height="6" fill="#222"/>
<g fill="none" stroke="#2a62b0"><rect x="744.9" y="576.5" width="23.3" height="22.5" rx="3.5" stroke-width="1.3" fill="#fff"/><rect x="749.5" y="580.5" width="9.5" height="8.5" stroke-width="1.2" fill="#f4f8fc"/><path d="M751,587 L753,584.5 L755,585.5 L757,583" stroke-width="1"/><path d="M754.5,588.5 V594.5 Q754.5,596.3 759,596.3 Q763.5,596.3 763.5,594.5 V588.5" stroke-width="1.3" fill="#fff"/><ellipse cx="759" cy="588.4" rx="4.5" ry="1.8" stroke-width="1.3" fill="#fff"/><path d="M756.5,591.5 H761.5 M756.5,593.6 H761.5" stroke-width="1.1"/></g>
<g filter="url(#sh)"><rect x="99" y="258.3" width="124.5" height="53.5" fill="none" stroke="#f20000" stroke-width="2.2"/><path d="M1057,237 L247,290.8" stroke="#f20000" stroke-width="2.2" fill="none"/><path d="M237.5,291.5 L249,287 L250,295 Z" fill="#f20000"/></g>
</svg>
<svg class="a" style="left:1144px;top:361px" width="22" height="30" viewBox="0 0 22 30"><path d="M1.6,1.3 L1.6,24.2 L6.5,20.1 L10.4,27.4 L14.8,25.7 L11.5,19.5 L18.6,18.9 Z" fill="#fff" stroke="#1a1a22" stroke-width="1.1" stroke-linejoin="round"/></svg>
</body></html>
